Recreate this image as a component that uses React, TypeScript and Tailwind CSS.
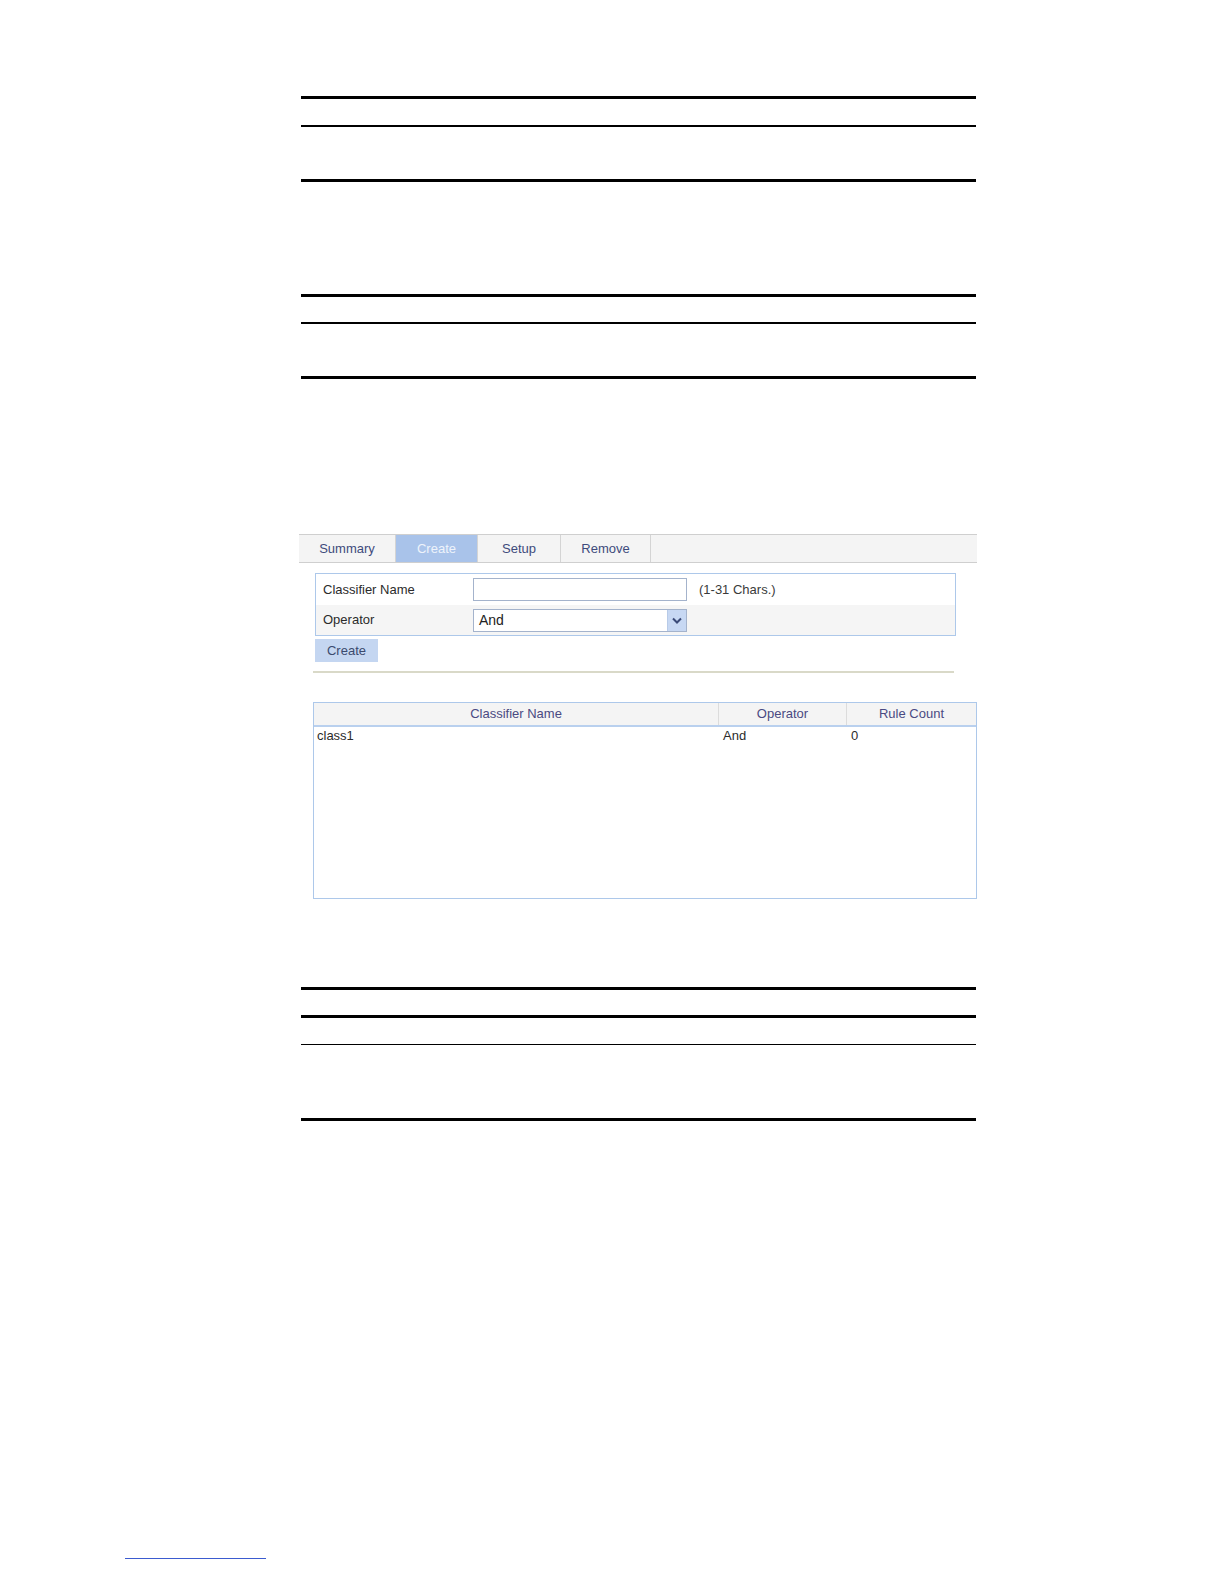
const font = { fontFamily: '"Liberation Sans", Arial, sans-serif' }

function RuleTable({ gaps }: { gaps: { h: number; w: number }[] }) {
  return (
    <div className="ml-[301px] w-[675px]">
      {gaps.map((g, i) => (
        <div key={i} className="bg-black" style={{ height: g.w, marginTop: g.h }} />
      ))}
    </div>
  )
}

function Tabs() {
  const tabs = [
    { label: 'Summary', w: 'w-[97px]' },
    { label: 'Create', w: 'w-[82px]', active: true },
    { label: 'Setup', w: 'w-[83px]' },
    { label: 'Remove', w: 'w-[90px]' },
  ]
  return (
    <div className="flex h-[29px] border-y border-[#cfcfcf] bg-[#f4f4f4]">
      {tabs.map((t) => (
        <div
          key={t.label}
          className={`${t.w} flex items-center justify-center border-r border-[#d4d4d4] text-[13px] ${
            t.active ? 'bg-[#a9c3ea] text-[#eef3fb]' : 'text-[#3e4b7c]'
          }`}
        >
          {t.label}
        </div>
      ))}
    </div>
  )
}

function ChevronButton() {
  return (
    <div className="flex h-full w-[19px] items-center justify-center border-l border-[#b8cbe8] bg-[#c7d8f3]">
      <svg width="10" height="7" viewBox="0 0 10 7">
        <path d="M1 1.5 L5 5.5 L9 1.5" fill="none" stroke="#3a4a78" strokeWidth="2" />
      </svg>
    </div>
  )
}

export default function App() {
  return (
    <div className="min-h-[1584px] w-[1224px] bg-white text-[#333]" style={font}>
      <div className="pt-[96px]" />
      <RuleTable gaps={[{ h: 0, w: 3 }, { h: 26, w: 2 }, { h: 52, w: 3 }]} />
      <RuleTable gaps={[{ h: 112, w: 3 }, { h: 25, w: 2 }, { h: 52, w: 3 }]} />

      <div className="ml-[299px] mt-[155px] w-[678px]">
        <Tabs />

        <div className="ml-[16px] mt-[10px] w-[641px] border border-[#adc8ea]">
          <div className="flex h-[31px] items-center bg-white">
            <div className="w-[157px] pl-[7px] text-[13px] text-[#2b2b2b]">Classifier Name</div>
            <div className="h-[23px] w-[214px] border border-[#a4b3cc] bg-white" />
            <div className="ml-[12px] text-[13px] text-[#3a3a3a]">(1-31 Chars.)</div>
          </div>
          <div className="flex h-[30px] items-center bg-[#f5f5f5]">
            <div className="w-[157px] pl-[7px] text-[13px] text-[#2b2b2b]">Operator</div>
            <div className="flex h-[23px] w-[214px] items-center border border-[#a4b3cc] bg-white">
              <div className="flex-1 pl-[5px] text-[14px] text-[#222]">And</div>
              <ChevronButton />
            </div>
          </div>
        </div>

        <div className="ml-[16px] mt-[3px] flex h-[23px] w-[63px] items-center justify-center bg-[#c4d6f1] text-[13px] text-[#3b4a6e]">
          Create
        </div>

        <div className="ml-[14px] mt-[9px] h-[2px] w-[641px] bg-[#d9d9c8]" />

        <div className="ml-[14px] mt-[29px] h-[197px] w-[664px] border border-[#adc8ea]">
          <div className="flex h-[24px] border-b-2 border-[#b9d0ee] bg-[#f4f4f4] text-[13px] text-[#4a4a82]">
            <div className="flex w-[405px] items-center justify-center border-r border-[#dcdcdc]">Classifier Name</div>
            <div className="flex w-[128px] items-center justify-center border-r border-[#dcdcdc]">Operator</div>
            <div className="flex flex-1 items-center justify-center">Rule Count</div>
          </div>
          <div className="flex h-[18px] items-center text-[13px] text-[#2b2b2b]">
            <div className="w-[405px] pl-[3px]">class1</div>
            <div className="w-[128px] pl-[4px]">And</div>
            <div className="flex-1 pl-[4px]">0</div>
          </div>
        </div>
      </div>

      <div className="ml-[301px] mt-[88px] w-[675px]">
        <div className="h-[3px] bg-black" />
        <div className="mt-[25px] h-[3px] bg-black" />
        <div className="mt-[26px] h-px bg-black" />
        <div className="mt-[73px] h-[3px] bg-black" />
      </div>

      <div className="ml-[125px] mt-[437px] h-px w-[141px] bg-[#3b5bd0]" />
    </div>
  )
}
